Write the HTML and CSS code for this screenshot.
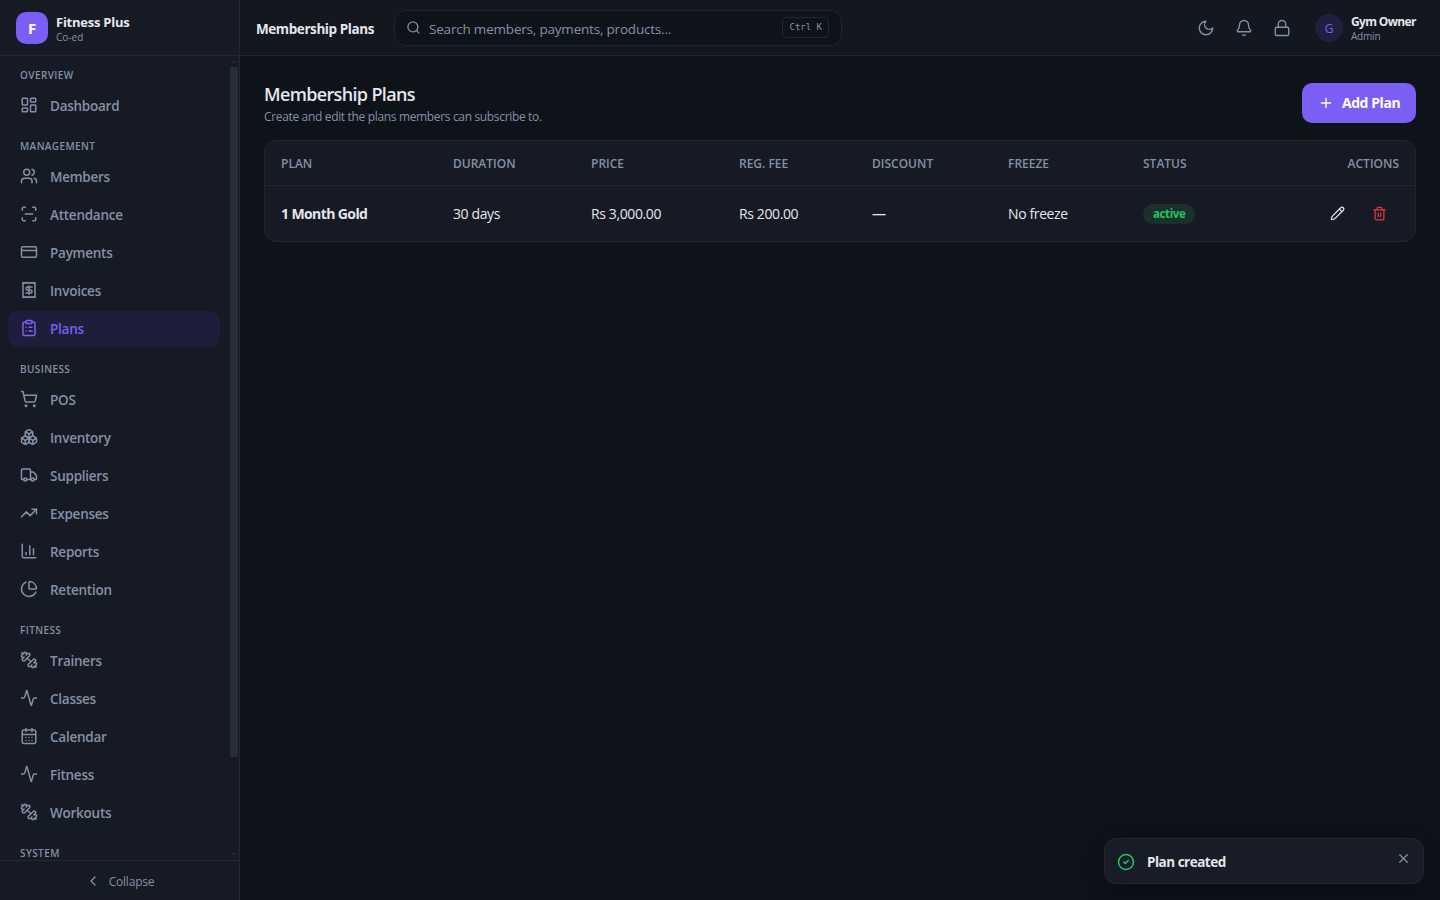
FILE: index.html
```html
<!DOCTYPE html>
<html lang="en">
    <head>
        <meta charset="UTF-8">
        <title>Membership Plans - Fitness Plus</title>
        <link rel="stylesheet" href="styles.css">
    </head>
    <body>
        <!-- shared icons -->
        <svg class="defs" width="0" height="0">
            <symbol id="dumbbell" viewBox="0 0 24 24"><path d="M14.4 14.4 9.6 9.6"/><path d="M18.657 21.485a2 2 0 1 1-2.829-2.828l-1.767 1.768a2 2 0 1 1-2.829-2.829l6.364-6.364a2 2 0 1 1 2.829 2.829l-1.768 1.767a2 2 0 1 1 2.828 2.829z"/><path d="m21.5 21.5-1.4-1.4"/><path d="M3.9 3.9 2.5 2.5"/><path d="M6.404 12.768a2 2 0 1 1-2.829-2.829l1.768-1.767a2 2 0 1 1-2.828-2.829l2.828-2.828a2 2 0 1 1 2.829 2.828l1.767-1.768a2 2 0 1 1 2.829 2.829z"/></symbol>
            <symbol id="activity" viewBox="0 0 24 24"><path d="M22 12h-2.48a2 2 0 0 0-1.93 1.46l-2.35 8.36a.25.25 0 0 1-.48 0L9.24 2.18a.25.25 0 0 0-.48 0l-2.35 8.36A2 2 0 0 1 4.49 12H2"/></symbol>
        </svg>

        <aside class="sidebar">
            <div class="brand">
                <div class="logo">F</div>
                <div>
                    <p class="brand-name">Fitness Plus</p>
                    <p class="brand-sub">Co-ed</p>
                </div>
            </div>

            <nav>
                <h3>Overview</h3>
                <a><svg viewBox="0 0 24 24"><rect width="7" height="9" x="3" y="3" rx="1"/><rect width="7" height="5" x="14" y="3" rx="1"/><rect width="7" height="9" x="14" y="12" rx="1"/><rect width="7" height="5" x="3" y="16" rx="1"/></svg><span>Dashboard</span></a>

                <h3>Management</h3>
                <a><svg viewBox="0 0 24 24"><path d="M16 21v-2a4 4 0 0 0-4-4H6a4 4 0 0 0-4 4v2"/><circle cx="9" cy="7" r="4"/><path d="M22 21v-2a4 4 0 0 0-3-3.87"/><path d="M16 3.13a4 4 0 0 1 0 7.75"/></svg><span>Members</span></a>
                <a><svg viewBox="0 0 24 24"><path d="M3 7V5a2 2 0 0 1 2-2h2"/><path d="M17 3h2a2 2 0 0 1 2 2v2"/><path d="M21 17v2a2 2 0 0 1-2 2h-2"/><path d="M7 21H5a2 2 0 0 1-2-2v-2"/><path d="M7 12h10"/></svg><span>Attendance</span></a>
                <a><svg viewBox="0 0 24 24"><rect width="20" height="14" x="2" y="5" rx="2"/><path d="M2 10h20"/></svg><span>Payments</span></a>
                <a><svg viewBox="0 0 24 24"><path d="M4 2v20l2-1 2 1 2-1 2 1 2-1 2 1 2-1 2 1V2l-2 1-2-1-2 1-2-1-2 1-2-1-2 1Z"/><path d="M16 8h-6a2 2 0 1 0 0 4h4a2 2 0 1 1 0 4H8"/><path d="M12 17.5v-11"/></svg><span>Invoices</span></a>
                <a class="active"><svg viewBox="0 0 24 24"><rect width="8" height="4" x="8" y="2" rx="1"/><path d="M16 4h2a2 2 0 0 1 2 2v14a2 2 0 0 1-2 2H6a2 2 0 0 1-2-2V6a2 2 0 0 1 2-2h2"/><path d="M12 11h4"/><path d="M12 16h4"/><path d="M8 11h.01"/><path d="M8 16h.01"/></svg><span>Plans</span></a>

                <h3>Business</h3>
                <a><svg viewBox="0 0 24 24"><circle cx="8" cy="21" r="1"/><circle cx="19" cy="21" r="1"/><path d="M2.05 2.05h2l2.66 12.42a2 2 0 0 0 2 1.58h9.78a2 2 0 0 0 1.95-1.57l1.65-7.43H5.12"/></svg><span>POS</span></a>
                <a><svg viewBox="0 0 24 24"><path d="M2.97 12.92A2 2 0 0 0 2 14.63v3.24a2 2 0 0 0 .97 1.71l3 1.8a2 2 0 0 0 2.06 0L12 19v-5.5l-5-3-4.03 2.42Z"/><path d="m7 16.5-4.74-2.85"/><path d="m7 16.5 5-3"/><path d="M7 16.5v5.17"/><path d="M12 13.5V19l3.97 2.38a2 2 0 0 0 2.06 0l3-1.8a2 2 0 0 0 .97-1.71v-3.24a2 2 0 0 0-.97-1.71L17 10.5l-5 3Z"/><path d="m17 16.5-5-3"/><path d="m17 16.5 4.74-2.85"/><path d="M17 16.5v5.17"/><path d="M7.97 4.42A2 2 0 0 0 7 6.13v4.37l5 3 5-3V6.13a2 2 0 0 0-.97-1.71l-3-1.8a2 2 0 0 0-2.06 0l-3 1.8Z"/><path d="M12 8 7.26 5.15"/><path d="m12 8 4.74-2.85"/><path d="M12 13.5V8"/></svg><span>Inventory</span></a>
                <a><svg viewBox="0 0 24 24"><path d="M14 18V6a2 2 0 0 0-2-2H4a2 2 0 0 0-2 2v11a1 1 0 0 0 1 1h2"/><path d="M15 18H9"/><path d="M19 18h2a1 1 0 0 0 1-1v-3.65a1 1 0 0 0-.22-.624l-3.48-4.35A1 1 0 0 0 17.52 8H14"/><circle cx="17" cy="18" r="2"/><circle cx="7" cy="18" r="2"/></svg><span>Suppliers</span></a>
                <a><svg viewBox="0 0 24 24"><path d="m22 7-8.5 8.5-5-5L2 17"/><path d="M16 7h6v6"/></svg><span>Expenses</span></a>
                <a><svg viewBox="0 0 24 24"><path d="M3 3v16a2 2 0 0 0 2 2h16"/><path d="M18 17V9"/><path d="M13 17V5"/><path d="M8 17v-3"/></svg><span>Reports</span></a>
                <a><svg viewBox="0 0 24 24"><path d="M21 12c.552 0 1.005-.449.95-.998a10 10 0 0 0-8.953-8.951c-.55-.055-.998.398-.998.95v8a1 1 0 0 0 1 1z"/><path d="M21.21 15.89A10 10 0 1 1 8 2.83"/></svg><span>Retention</span></a>

                <h3>Fitness</h3>
                <a><svg><use href="#dumbbell"/></svg><span>Trainers</span></a>
                <a><svg><use href="#activity"/></svg><span>Classes</span></a>
                <a><svg viewBox="0 0 24 24"><path d="M8 2v4"/><path d="M16 2v4"/><rect width="18" height="18" x="3" y="4" rx="2"/><path d="M3 10h18"/><path d="M8 14h.01"/><path d="M12 14h.01"/><path d="M16 14h.01"/><path d="M8 18h.01"/><path d="M12 18h.01"/><path d="M16 18h.01"/></svg><span>Calendar</span></a>
                <a><svg><use href="#activity"/></svg><span>Fitness</span></a>
                <a><svg><use href="#dumbbell"/></svg><span>Workouts</span></a>

                <h3>System</h3>
                <div class="scrollbar"><i class="up"></i><i class="thumb"></i><i class="down"></i></div>
            </nav>

            <div class="collapse">
                <svg viewBox="0 0 24 24"><path d="m15 18-6-6 6-6"/></svg>
                <span>Collapse</span>
            </div>
        </aside>

        <div class="page">
            <header>
                <p class="crumb">Membership Plans</p>
                <div class="search">
                    <svg viewBox="0 0 24 24"><circle cx="11" cy="11" r="8"/><path d="m21 21-4.3-4.3"/></svg>
                    <span>Search members, payments, products...</span>
                    <kbd>Ctrl K</kbd>
                </div>
                <div class="tools">
                    <svg viewBox="0 0 24 24"><path d="M12 3a6 6 0 0 0 9 9 9 9 0 1 1-9-9Z"/></svg>
                    <svg viewBox="0 0 24 24"><path d="M10.268 21a2 2 0 0 0 3.464 0"/><path d="M3.262 15.326A1 1 0 0 0 4 17h16a1 1 0 0 0 .74-1.673C19.41 13.956 18 12.499 18 8A6 6 0 0 0 6 8c0 4.499-1.411 5.956-2.738 7.326"/></svg>
                    <svg viewBox="0 0 24 24"><rect width="18" height="11" x="3" y="11" rx="2"/><path d="M7 11V7a5 5 0 0 1 10 0v4"/></svg>
                </div>
                <div class="user">
                    <div class="avatar">G</div>
                    <div class="user-text">
                        <p class="user-name">Gym Owner</p>
                        <p class="user-role">Admin</p>
                    </div>
                </div>
            </header>

            <main>
                <div class="title-row">
                    <div>
                        <h1>Membership Plans</h1>
                        <p class="subtitle">Create and edit the plans members can subscribe to.</p>
                    </div>
                    <button>
                        <svg viewBox="0 0 24 24"><path d="M5 12h14"/><path d="M12 5v14"/></svg>
                        <span>Add Plan</span>
                    </button>
                </div>

                <div class="card">
                    <table>
                        <colgroup>
                            <col class="c-plan">
                            <col class="c-duration">
                            <col class="c-price">
                            <col class="c-fee">
                            <col class="c-discount">
                            <col class="c-freeze">
                            <col class="c-status">
                            <col>
                        </colgroup>
                        <thead>
                            <tr>
                                <th>Plan</th>
                                <th>Duration</th>
                                <th>Price</th>
                                <th>Reg. Fee</th>
                                <th>Discount</th>
                                <th>Freeze</th>
                                <th>Status</th>
                                <th class="right">Actions</th>
                            </tr>
                        </thead>
                        <tbody>
                            <tr>
                                <td class="name">1 Month Gold</td>
                                <td>30 days</td>
                                <td>Rs 3,000.00</td>
                                <td>Rs 200.00</td>
                                <td>—</td>
                                <td>No freeze</td>
                                <td><span class="badge">active</span></td>
                                <td>
                                    <div class="actions">
                                        <svg viewBox="0 0 24 24"><path d="M21.174 6.812a1 1 0 0 0-3.986-3.987L3.842 16.174a2 2 0 0 0-.5.83l-1.321 4.352a.5.5 0 0 0 .623.622l4.353-1.32a2 2 0 0 0 .83-.497z"/><path d="m15 5 4 4"/></svg>
                                        <svg class="danger" viewBox="0 0 24 24"><path d="M3 6h18"/><path d="M19 6v14c0 1-1 2-2 2H7c-1 0-2-1-2-2V6"/><path d="M8 6V4c0-1 1-2 2-2h4c1 0 2 1 2 2v2"/><path d="M10 11v6"/><path d="M14 11v6"/></svg>
                                    </div>
                                </td>
                            </tr>
                        </tbody>
                    </table>
                </div>
            </main>
        </div>

        <div class="toast">
            <svg class="ok" viewBox="0 0 24 24"><circle cx="12" cy="12" r="10"/><path d="m9 12 2 2 4-4"/></svg>
            <p>Plan created</p>
            <svg class="close" viewBox="0 0 24 24"><path d="M18 6 6 18"/><path d="m6 6 12 12"/></svg>
        </div>
    </body>
</html>
```
FILE: styles.css
```css
* { box-sizing: border-box; margin: 0; padding: 0; }
body { display: flex; height: 100vh; overflow: hidden; background-color: #0e1219; color: #e4e7ec; font-family: 'Segoe UI', 'Open Sans', 'Noto Sans', sans-serif; font-size: 14px; }
svg { flex: none; fill: none; stroke: currentColor; stroke-width: 2; stroke-linecap: round; stroke-linejoin: round; }
svg.defs { position: absolute; }

/* sidebar */
.sidebar { display: flex; flex-direction: column; flex: none; width: 240px; height: 100vh; background-color: #161a24; border-right: 1px solid #222732; color: #8391a7; }
.brand { display: flex; align-items: center; flex: none; gap: 8px; height: 56px; padding: 0 16px; border-bottom: 1px solid #222732; }
.logo { width: 32px; height: 32px; border-radius: 10px; background-color: #7b5ff5; color: #fff; font-size: 15px; font-weight: 700; line-height: 33px; text-align: center; }
.brand-name { padding-top: 3px; color: #e4e7ec; font-size: 13px; font-weight: 700; line-height: 17px; letter-spacing: -0.25px; }
.brand-sub { font-size: 10px; line-height: 13px; }

nav { position: relative; flex: 1; overflow: hidden; padding: 8px 19px 0 8px; }
nav h3 { height: 23px; margin-bottom: 0.5px; padding: 4px 12px 0; font-size: 10px; font-weight: 600; line-height: 15px; letter-spacing: 0.4px; text-transform: uppercase; }
nav a + h3 { margin-top: 11.5px; }
nav a { display: flex; align-items: center; gap: 12px; height: 36px; margin-bottom: 2px; padding: 0 12px; border-radius: 10px; font-size: 13.5px; font-weight: 600; letter-spacing: -0.25px; }
nav a svg { width: 18px; height: 18px; margin-top: -1px; }
nav a.active { background-color: #1f1e3a; color: #7b5ff5; }

.scrollbar { position: absolute; top: 0; right: 1px; bottom: 0; width: 8px; }
.scrollbar i { position: absolute; }
.scrollbar .thumb { top: 11px; left: 0; width: 8px; height: 690px; background-color: #262c38; }
.scrollbar .up { top: 4px; left: 2px; border: 2px solid transparent; border-top: 0; border-bottom: 3px solid #262c38; }
.scrollbar .down { bottom: 4px; left: 2px; border: 2px solid transparent; border-bottom: 0; border-top: 3px solid #262c38; }

.collapse { display: flex; align-items: center; justify-content: center; flex: none; gap: 8px; height: 40px; border-top: 1px solid #222732; font-size: 12px; letter-spacing: -0.2px; }
.collapse span { padding-top: 2px; }
.collapse svg { width: 16px; height: 16px; }

/* top bar */
.page { flex: 1; min-width: 0; }
header { display: flex; align-items: center; height: 56px; padding: 0 24px 0 16px; background-color: #131720; border-bottom: 1px solid #222732; }
.crumb { width: 138px; padding-top: 2px; font-size: 13.5px; font-weight: 700; line-height: 20px; letter-spacing: -0.42px; white-space: nowrap; }
.search { display: flex; align-items: center; gap: 8px; width: 448px; height: 36px; padding: 0 12px 0 11px; border: 1px solid #20252f; border-radius: 12px; background-color: #0e1219; color: #8391a7; }
.search svg { width: 15px; height: 15px; }
.search span { flex: 1; padding-top: 2px; font-size: 13.5px; letter-spacing: -0.2px; }
.search kbd { height: 21px; padding: 0 6px; border: 1px solid #222732; border-radius: 4px; font-family: 'DejaVu Sans Mono', monospace; font-size: 9px; line-height: 19px; }
.tools { display: flex; gap: 20px; margin-left: auto; color: #8391a7; }
.tools svg { width: 18px; height: 18px; stroke-width: 1.85; }
.user { display: flex; align-items: center; gap: 8px; margin-left: 24px; }
.avatar { width: 28px; height: 28px; border-radius: 50%; background-color: #211f3f; color: #7b5ff5; font-size: 12px; line-height: 29px; text-align: center; }
.user-text { width: 65px; }
.user-name { font-size: 12px; font-weight: 700; line-height: 16px; letter-spacing: -0.65px; white-space: nowrap; }
.user-role { color: #8391a7; font-size: 10px; line-height: 12px; letter-spacing: -0.2px; }

/* content */
main { padding: 24px; }
.title-row { display: flex; align-items: center; justify-content: space-between; height: 45px; margin-bottom: 15px; }
h1 { font-size: 18px; font-weight: 600; line-height: 28px; letter-spacing: -0.65px; }
.subtitle { color: #8391a7; font-size: 12px; line-height: 17px; letter-spacing: -0.34px; }
button { display: flex; align-items: center; gap: 8px; width: 114px; height: 40px; padding: 0 16px; border: 0; border-radius: 10px; background-color: #7b5ff5; color: #fff; font: 700 14px 'Segoe UI', 'Open Sans', sans-serif; letter-spacing: -0.45px; white-space: nowrap; }
button svg { width: 16px; height: 16px; }

.card { border: 1px solid #20252f; border-radius: 12px; background-color: #161a24; }
table { width: 100%; table-layout: fixed; border-collapse: separate; border-spacing: 0; }
.c-plan { width: 172px; }
.c-duration { width: 138px; }
.c-price { width: 148px; }
.c-fee { width: 133px; }
.c-discount { width: 136px; }
.c-freeze { width: 135px; }
.c-status { width: 130px; }
th { height: 45px; padding: 0 16px; border-bottom: 1px solid #20252f; color: #8391a7; font-size: 12px; font-weight: 600; text-align: left; text-transform: uppercase; }
th.right { text-align: right; }
td { height: 55px; padding: 0 16px; letter-spacing: -0.38px; }
td.name { font-weight: 700; letter-spacing: -0.6px; }
.badge { display: inline-block; height: 20px; padding: 0 10px; border-radius: 10px; background-color: #19302d; color: #22c55e; font-size: 11.5px; font-weight: 700; line-height: 19px; vertical-align: middle; }
.actions { display: flex; justify-content: flex-end; gap: 27px; padding-right: 12px; }
.actions svg { width: 15px; height: 15px; }
.actions .danger { color: #d63d3f; }

.toast { position: absolute; right: 16px; bottom: 16px; display: flex; align-items: center; width: 320px; height: 46px; padding: 1px 12px 0; border: 1px solid #222732; border-radius: 12px; background-color: #181c27; box-shadow: 0 8px 24px rgba(0, 0, 0, 0.3); }
.toast p { flex: 1; margin-left: 12px; font-size: 13.5px; font-weight: 700; letter-spacing: -0.5px; }
.toast .ok { width: 18px; height: 18px; color: #22c55e; }
.toast .close { width: 15px; height: 15px; margin-top: -6px; color: #8391a7; }
```
